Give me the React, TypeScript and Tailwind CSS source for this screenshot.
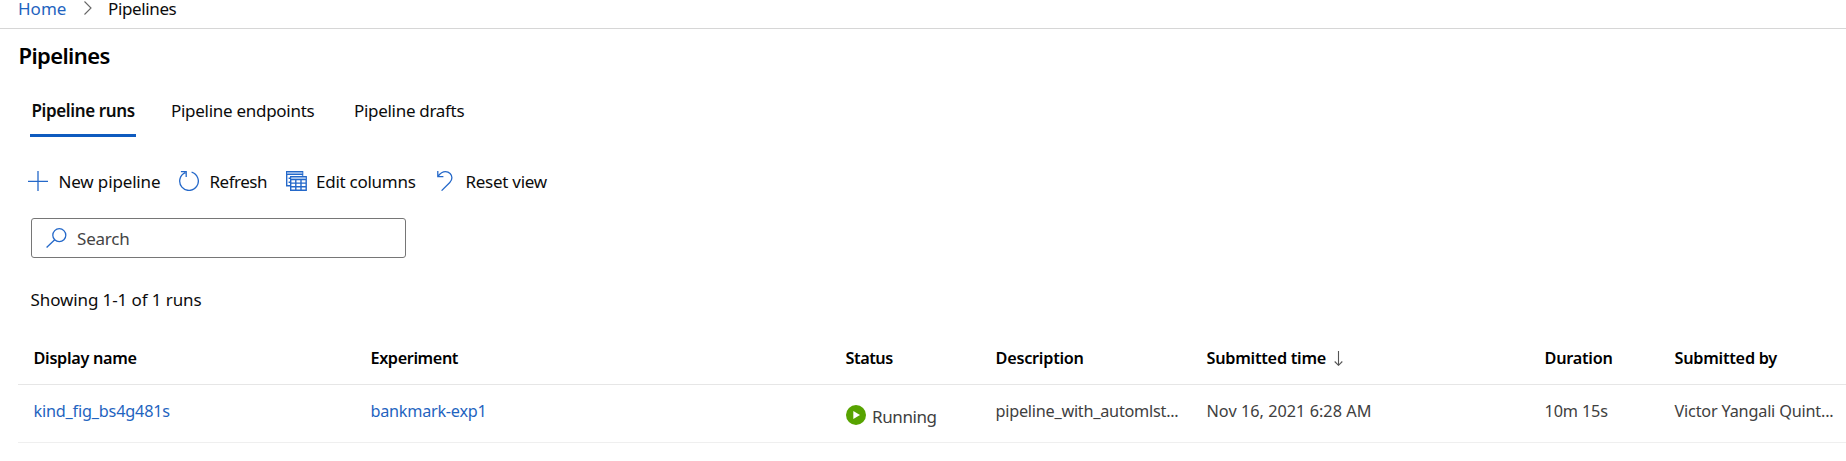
import type { ReactNode } from "react";

const tabs = [
  { label: "Pipeline runs", style: "ml-[30px] w-[106px] pl-[1.5px] border-[#0f5bbf] font-semibold tracking-[-0.38px]" },
  { label: "Pipeline endpoints", style: "ml-[35px] w-[146px] border-transparent tracking-[-0.28px]" },
  { label: "Pipeline drafts", style: "ml-[37px] w-[120px] border-transparent tracking-[-0.3px]" },
];

const columns = [
  { label: "Display name", style: "tracking-[-0.3px]" },
  { label: "Experiment", style: "tracking-[-0.4px]" },
  { label: "Status", style: "tracking-[-0.45px]" },
  { label: "Description", style: "tracking-[-0.25px]" },
  { label: "Submitted time", style: "tracking-[-0.25px]", sorted: true },
  { label: "Duration", style: "tracking-[-0.25px]" },
  { label: "Submitted by", style: "tracking-[-0.25px]" },
];

const grid =
  "ml-[18px] pl-[15.5px] grid grid-cols-[337px_475px_150px_211px_338px_130px_1fr] whitespace-nowrap border-b text-[16.25px]";

function PlusIcon() {
  return (
    <svg width="20" height="20" viewBox="0 0 20 20" fill="none" stroke="#2468c9" strokeWidth="1.3">
      <path d="M10 0v20M0 10.3h20" />
    </svg>
  );
}

function RefreshIcon() {
  return (
    <svg width="20" height="20" viewBox="0 0 20 20" fill="none" stroke="#2468c9" strokeWidth="1.3">
      <path d="M12.6 1.2A9.3 9.3 0 1 1 6.3 1.6M1.9.7h5.3v5.3" />
    </svg>
  );
}

function ColumnsIcon() {
  return (
    <svg width="21" height="20" viewBox="0 0 21 20" fill="none" stroke="#2468c9" strokeWidth="1.4">
      <path d="M16.6 4.8V.7H.7v14H4M.7 3.3h15.9M2.6 7.2h1.6M2.6 11.2h1.6" />
      <path d="M4.7 5.7h15.5v13.6H4.7zM4.7 8.6h15.5M4.7 12.1h15.5M4.7 15.7h15.5M9.8 8.6v10.7M15 8.6v10.7" />
      <path d="M1 2h15.5M5 7.1h15" stroke="#8db2e6" />
    </svg>
  );
}

function ResetIcon() {
  return (
    <svg width="16" height="20" viewBox="0 0 16 20" fill="none" stroke="#2468c9" strokeWidth="1.3">
      <path d="M.8 0v5.6h5.6M1 5.4C3 2.7 5.2.7 8.5.7c3.7 0 6.4 2.7 6.4 6.1 0 2-.8 3.4-2.1 4.7L4.6 19.6" />
    </svg>
  );
}

function Action({ icon, label, style }: { icon: ReactNode; label: string; style: string }) {
  return (
    <button className={`flex items-center whitespace-nowrap ${style}`}>
      {icon}
      <span className="pt-[2px]">{label}</span>
    </button>
  );
}

export default function App() {
  return (
    <div className="h-[461px] overflow-hidden bg-white font-['Noto_Sans','Open_Sans',sans-serif] text-[17px] text-[#0c0c0c]">
      <nav className="flex h-[29px] border-b border-[#d6d6d6] pl-[18px] leading-[17px]">
        <a className="w-[66px] text-[#1f64c0]">Home</a>
        <svg className="mt-[1px] mr-[16px]" width="8" height="14" viewBox="0 0 8 14" fill="none" stroke="#666" strokeWidth="1.1">
          <path d="M.5.5 7 7 .5 13.5" />
        </svg>
        <span className="tracking-[-0.37px]">Pipelines</span>
      </nav>

      <h1 className="h-[53px] pl-[18.5px] text-[22px] font-semibold leading-[53px] tracking-[-0.6px] text-black">Pipelines</h1>

      <div className="flex h-[55px] whitespace-nowrap leading-[58px]">
        {tabs.map((tab) => (
          <div key={tab.label} className={`h-[55px] border-b-3 ${tab.style}`}>
            {tab.label}
          </div>
        ))}
      </div>

      <div className="mt-[22px] flex h-[44px] pl-[28px]">
        <Action icon={<PlusIcon />} label="New pipeline" style="w-[151px] gap-[10.5px] tracking-[-0.15px]" />
        <Action icon={<RefreshIcon />} label="Refresh" style="w-[107px] gap-[10.5px] tracking-[-0.5px]" />
        <Action icon={<ColumnsIcon />} label="Edit columns" style="w-[151px] gap-[9px] tracking-[-0.26px]" />
        <Action icon={<ResetIcon />} label="Reset view" style="gap-[12.5px] tracking-[-0.28px]" />
      </div>

      <div className="ml-[31px] mt-[15px] flex h-[40px] w-[375px] items-center gap-[9px] rounded-[3px] border border-[#767676] pl-[14px] text-[#444]">
        <svg width="21" height="20" viewBox="0 0 21 20" fill="none" stroke="#2468c9" strokeWidth="1.3">
          <circle cx="13.3" cy="7.2" r="6.5" />
          <path d="M8.7 11.8.6 19.5" />
        </svg>
        <span className="pl-[1px] pt-[2px] tracking-[-0.2px]">Search</span>
      </div>

      <p className="mt-[22px] h-[40px] pl-[30.5px] leading-[40px] tracking-[-0.1px]">Showing 1-1 of 1 runs</p>

      <div className={`${grid} mt-[10px] h-[55px] border-[#e6e6e6] font-semibold leading-[56px] text-black`}>
        {columns.map((c) => (
          <div key={c.label} className={`flex items-center ${c.style}`}>
            {c.label}
            {c.sorted && (
              <svg className="ml-[8px]" width="9" height="15" viewBox="0 0 9 15" fill="none" stroke="#555" strokeWidth="1.1">
                <path d="M4.5 0v14M.7 10.5l3.8 3.8 3.800-3.8" />
              </svg>
            )}
          </div>
        ))}
      </div>

      <div className={`${grid} h-[58px] border-[#efefef] leading-[53px] text-[#404040]`}>
        <a className="tracking-[-0.2px] text-[#1f64c0]">kind_fig_bs4g481s</a>
        <a className="tracking-[-0.27px] text-[#1f64c0]">bankmark-exp1</a>
        <div className="flex pl-[0.5px] text-[17px] leading-[63px] tracking-[-0.4px]">
          <svg className="mr-[6px] mt-[20px]" width="20" height="20" viewBox="0 0 20 20">
            <circle cx="10" cy="10" r="10" fill="#57a300" />
            <path d="M7.3 6v8L14 10z" fill="#fff" />
          </svg>
          Running
        </div>
        <span className="tracking-[-0.25px]">pipeline_with_automlst...</span>
        <span className="tracking-[0.02px]">Nov 16, 2021 6:28 AM</span>
        <span className="tracking-[-0.15px]">10m 15s</span>
        <span className="tracking-[-0.2px]">Victor Yangali Quint...</span>
      </div>
    </div>
  );
}
